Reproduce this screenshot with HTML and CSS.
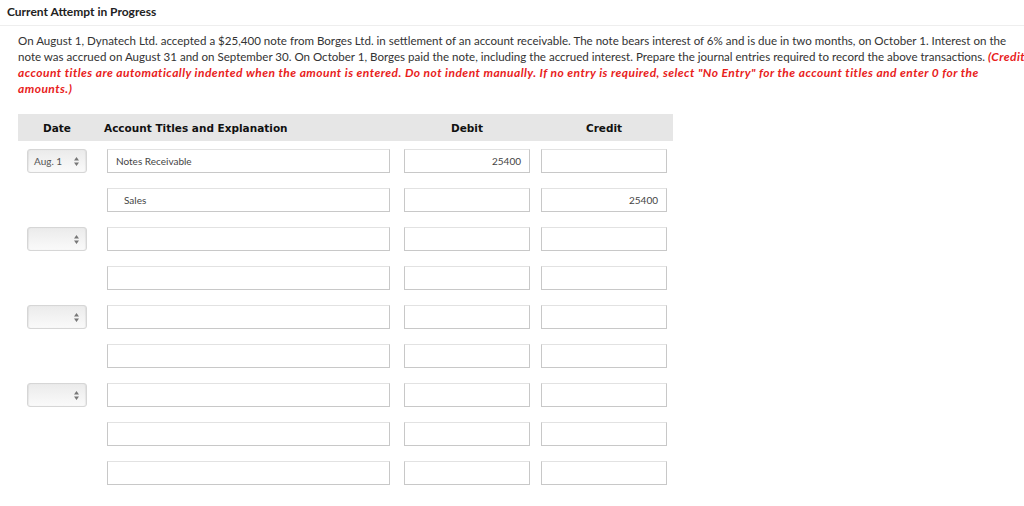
FILE: index.html
```html
<!DOCTYPE html>
<html>
<head>
<meta charset="utf-8">
<link rel="stylesheet" href="styles.css">
</head>
<body>
<div class="page">
  <div class="title">Current Attempt in Progress</div>
  <p class="question">On August 1, Dynatech Ltd. accepted a $25,400 note from Borges Ltd. in settlement of an account receivable. The note bears interest of 6% and is due in two months, on October 1. Interest on the note was accrued on August 31 and on September 30. On October 1, Borges paid the note, including the accrued interest. Prepare the journal entries required to record the above transactions. <em class="hint">(Credit account titles are automatically indented when the amount is entered. Do not indent manually. If no entry is required, select "No Entry" for the account titles and enter 0 for the amounts.)</em></p>

  <div class="journal">
    <div class="jhead">
      <div class="h-date">Date</div>
      <div class="h-acct">Account Titles and Explanation</div>
      <div class="h-debit">Debit</div>
      <div class="h-credit">Credit</div>
    </div>

    <div class="jbody">
      <div class="jrow">
        <div class="c-date"><div class="sel">Aug. 1<svg class="arr" width="5" height="9" viewBox="0 0 5 9"><path d="M2.5 0 L5 3.5 L0 3.5 Z M0 5.5 L5 5.5 L2.5 9 Z" fill="#777"/></svg></div></div>
        <div class="c-acct"><div class="inp">Notes Receivable</div></div>
        <div class="c-debit"><div class="inp num">25400</div></div>
        <div class="c-credit"><div class="inp num"></div></div>
      </div>
      <div class="jrow">
        <div class="c-date"></div>
        <div class="c-acct"><div class="inp indent">Sales</div></div>
        <div class="c-debit"><div class="inp num"></div></div>
        <div class="c-credit"><div class="inp num">25400</div></div>
      </div>

      <div class="jrow">
        <div class="c-date"><div class="sel blank"><svg class="arr" width="5" height="9" viewBox="0 0 5 9"><path d="M2.5 0 L5 3.5 L0 3.5 Z M0 5.5 L5 5.5 L2.5 9 Z" fill="#777"/></svg></div></div>
        <div class="c-acct"><div class="inp"></div></div>
        <div class="c-debit"><div class="inp num"></div></div>
        <div class="c-credit"><div class="inp num"></div></div>
      </div>
      <div class="jrow">
        <div class="c-date"></div>
        <div class="c-acct"><div class="inp"></div></div>
        <div class="c-debit"><div class="inp num"></div></div>
        <div class="c-credit"><div class="inp num"></div></div>
      </div>

      <div class="jrow">
        <div class="c-date"><div class="sel blank"><svg class="arr" width="5" height="9" viewBox="0 0 5 9"><path d="M2.5 0 L5 3.5 L0 3.5 Z M0 5.5 L5 5.5 L2.5 9 Z" fill="#777"/></svg></div></div>
        <div class="c-acct"><div class="inp"></div></div>
        <div class="c-debit"><div class="inp num"></div></div>
        <div class="c-credit"><div class="inp num"></div></div>
      </div>
      <div class="jrow">
        <div class="c-date"></div>
        <div class="c-acct"><div class="inp"></div></div>
        <div class="c-debit"><div class="inp num"></div></div>
        <div class="c-credit"><div class="inp num"></div></div>
      </div>

      <div class="jrow">
        <div class="c-date"><div class="sel blank"><svg class="arr" width="5" height="9" viewBox="0 0 5 9"><path d="M2.5 0 L5 3.5 L0 3.5 Z M0 5.5 L5 5.5 L2.5 9 Z" fill="#777"/></svg></div></div>
        <div class="c-acct"><div class="inp"></div></div>
        <div class="c-debit"><div class="inp num"></div></div>
        <div class="c-credit"><div class="inp num"></div></div>
      </div>
      <div class="jrow">
        <div class="c-date"></div>
        <div class="c-acct"><div class="inp"></div></div>
        <div class="c-debit"><div class="inp num"></div></div>
        <div class="c-credit"><div class="inp num"></div></div>
      </div>
      <div class="jrow">
        <div class="c-date"></div>
        <div class="c-acct"><div class="inp"></div></div>
        <div class="c-debit"><div class="inp num"></div></div>
        <div class="c-credit"><div class="inp num"></div></div>
      </div>
    </div>
  </div>
</div>
</body>
</html>
```

FILE: styles.css
```css
html, body {
  margin: 0;
  padding: 0;
  background: #fff;
  overflow: hidden;
}
body {
  font-family: Lato, "Open Sans", sans-serif;
  color: #333;
  width: 1024px;
  height: 506px;
}
.page {
  width: 1060px;
}
.title {
  font-size: 12px;
  font-weight: bold;
  line-height: 14px;
  color: #222;
  padding: 5px 0 6px 7px;
  border-bottom: 1px solid #eee;
}
.question {
  margin: 7px 0 0 18px;
  width: 1013px;
  font-size: 11.55px;
  line-height: 16px;
  color: #333;
}
.hint {
  color: #e8211b;
  font-weight: bold;
  font-style: italic;
  font-size: 12px;
  line-height: 16px;
  letter-spacing: 0.45px;
}
.journal {
  margin: 17px 0 0 18px;
  width: 655px;
}
.jhead {
  display: grid;
  grid-template-columns: 80px 297px 137px 126px;
  align-items: center;
  height: 27px;
  padding-left: 9px;
  background: #e6e6e6;
  font-family: "DejaVu Sans", Verdana, sans-serif;
  font-weight: bold;
  font-size: 10.5px;
  color: #111;
}
.h-date {
  width: 60px;
  text-align: center;
}
.h-acct {
  margin-left: -3px;
}
.h-debit, .h-credit {
  width: 126px;
  text-align: center;
}
.jbody {
  display: flex;
  flex-direction: column;
  gap: 15px;
  padding-top: 8px;
}
.jrow {
  display: grid;
  grid-template-columns: 80px 297px 137px 126px;
  padding-left: 9px;
  height: 24px;
}
.inp {
  box-sizing: border-box;
  height: 24px;
  border: 1px solid #c8c8c8;
  border-top-color: #e2e2e2;
  background: #fff;
  font-size: 10px;
  line-height: 22px;
  padding: 0 8px;
  color: #444;
}
.c-acct .inp {
  width: 283px;
}
.c-debit .inp, .c-credit .inp {
  width: 126px;
}
.inp.num {
  text-align: right;
}
.inp.indent {
  padding-left: 16px;
}
.sel {
  box-sizing: border-box;
  width: 60px;
  height: 24px;
  border: 1px solid #d6d6d6;
  border-radius: 3px;
  background: linear-gradient(#ebebeb, #fafafa);
  box-shadow: inset 1px 0 1px rgba(0,0,0,0.06), inset -1px 0 1px rgba(0,0,0,0.06);
  font-size: 10px;
  line-height: 22px;
  padding-left: 6px;
  color: #555;
  position: relative;
}
.arr {
  position: absolute;
  right: 7px;
  top: 7px;
}
```
